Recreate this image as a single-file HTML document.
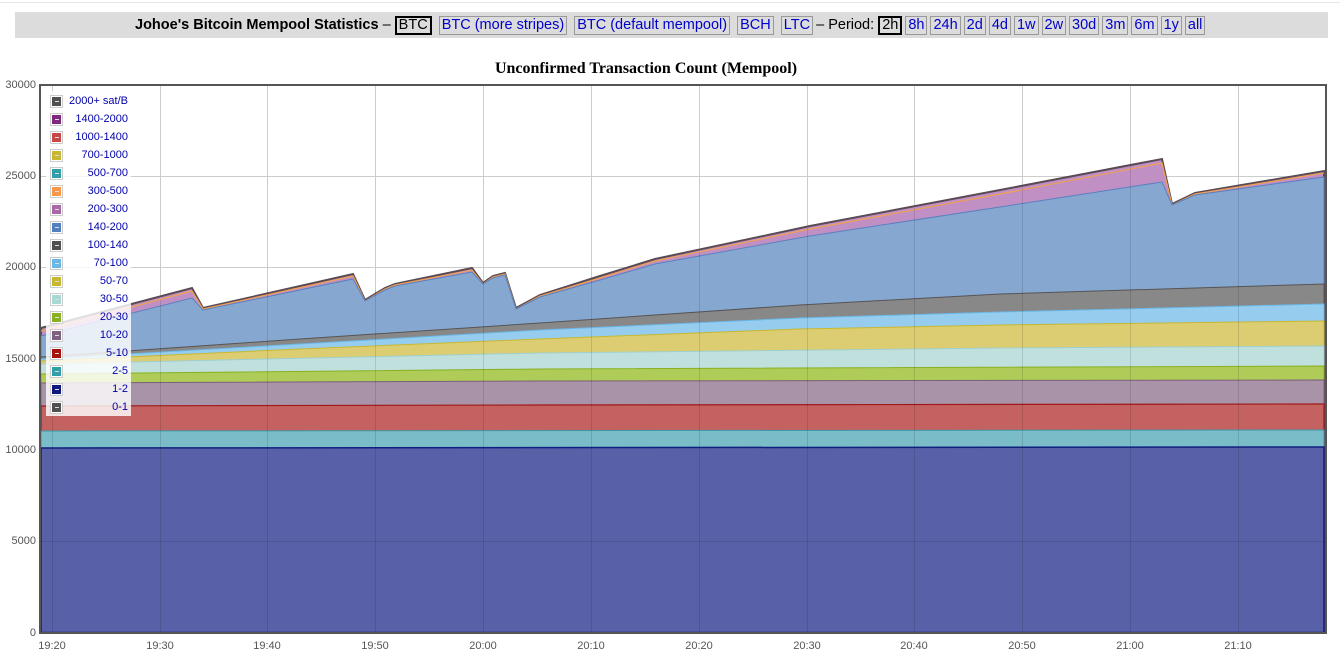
<!DOCTYPE html>
<html><head><meta charset="utf-8"><style>
body{margin:0;background:#fff;width:1340px;height:647px;overflow:hidden;font-family:"Liberation Sans",Arial,sans-serif;position:relative}
.bar{position:absolute;left:15px;top:12px;width:1313px;height:26px;background:#dcdcdc}
.nav{position:absolute;left:135px;top:16px;font-size:14.5px;white-space:nowrap;color:#000}
.nav b{font-weight:bold}
.nav span{display:inline-block;border:1px solid #999;color:#00c;padding:0 2px;line-height:17px;margin-right:3px}
.nav span.p{margin-right:3px}
.nav span.sel{border:2px solid #000;color:#000;line-height:15px}
.title{position:absolute;left:0;width:1292px;top:60px;text-align:center;font:bold 16px "Liberation Serif",serif}
.yl{position:absolute;right:1304px;font-size:11px;color:#555;text-align:right}
.xl{position:absolute;top:640px;font-size:11px;color:#555;width:40px;text-align:center}
.leg{position:absolute;left:46px;top:91px;width:85px;height:325px;background:rgba(255,255,255,0.82)}
.lr{position:absolute;left:4px;height:14px;width:78px;font-size:11px;color:#00a}
.lr i{position:absolute;left:0;top:0;width:11px;height:11px;border:1px solid #ccc;box-shadow:inset 0 0 0 1px #fff}
.lr i:after{content:"";position:absolute;left:4px;top:5px;width:4px;height:1px;background:#ddd}
.lr b{position:absolute;right:0;top:0;font-weight:normal}
</style></head><body>
<div style="position:absolute;left:0;top:2px;width:1340px;height:1px;background:#e6e6e6"></div>
<div class="bar"></div>
<div class="nav"><b>Johoe's Bitcoin Mempool Statistics</b> – <span class="sel">BTC</span> <span>BTC (more stripes)</span> <span>BTC (default mempool)</span> <span>BCH</span> <span>LTC</span>– Period: <span class="sel p">2h</span><span class="p">8h</span><span class="p">24h</span><span class="p">2d</span><span class="p">4d</span><span class="p">1w</span><span class="p">2w</span><span class="p">30d</span><span class="p">3m</span><span class="p">6m</span><span class="p">1y</span><span class="p">all</span></div>
<div class="title">Unconfirmed Transaction Count (Mempool)</div>
<svg style="position:absolute;left:0;top:0" width="1340" height="647">
<g stroke="#ccc" stroke-width="1">
<line x1="40" y1="176.5" x2="1326" y2="176.5"/><line x1="40" y1="267.5" x2="1326" y2="267.5"/><line x1="40" y1="359.5" x2="1326" y2="359.5"/><line x1="40" y1="450.5" x2="1326" y2="450.5"/><line x1="40" y1="541.5" x2="1326" y2="541.5"/>
<line x1="52.5" y1="85" x2="52.5" y2="633"/><line x1="160.5" y1="85" x2="160.5" y2="633"/><line x1="267.5" y1="85" x2="267.5" y2="633"/><line x1="375.5" y1="85" x2="375.5" y2="633"/><line x1="483.5" y1="85" x2="483.5" y2="633"/><line x1="591.5" y1="85" x2="591.5" y2="633"/><line x1="699.5" y1="85" x2="699.5" y2="633"/><line x1="807.5" y1="85" x2="807.5" y2="633"/><line x1="914.5" y1="85" x2="914.5" y2="633"/><line x1="1022.5" y1="85" x2="1022.5" y2="633"/><line x1="1130.5" y1="85" x2="1130.5" y2="633"/><line x1="1238.5" y1="85" x2="1238.5" y2="633"/>
</g>
<polygon fill="#c090c4" stroke="#5a4a55" stroke-width="2" points="41,328 192,288 203,308 353,274 365,300 385,288 395,284 472,268 483,283 493,276 505,273 516,308 540,295 600,276 655,259 810,226 1000,190 1162,159 1172,204 1195,193 1324,171 1324,633 41,633"/>
<polyline fill="none" stroke="#f0a050" stroke-width="1.2" points="41,331 192,291 203,309 353,276 365,301 385,289 395,285 472,270 483,284 493,277 505,274 516,309 540,296 600,278 655,261 810,229 1000,194 1162,163 1172,205 1195,194 1324,173"/>
<polygon fill="#86a8d0" stroke="#5a80c0" stroke-width="1" points="41,336 192,298 203,310 353,279 365,301 385,290 395,286 472,272 483,284 493,278 505,275 516,309 540,297 600,280 655,264 810,236 1000,207 1162,182 1172,205 1195,195 1324,177 1324,633 41,633"/>
<polygon fill="#888" stroke="#555" stroke-width="1" points="41,357 300,339 540,323 800,305 1000,294 1324,284 1324,633 41,633"/>
<polygon fill="#96cdee" stroke="#6ab8e8" stroke-width="1" points="41,359 300,344 540,330 800,318 1000,312 1324,304 1324,633 41,633"/>
<polygon fill="#dccd72" stroke="#c8b830" stroke-width="1" points="41,361 300,349 540,339 800,329 1000,325 1324,321 1324,633 41,633"/>
<polygon fill="#c0e0de" stroke="#9fcfcc" stroke-width="1" points="41,364 540,353 1000,348 1324,346 1324,633 41,633"/>
<polygon fill="#b0cc58" stroke="#88b020" stroke-width="1" points="41,374 540,369 1324,366 1324,633 41,633"/>
<polygon fill="#a993a8" stroke="#7a6078" stroke-width="1" points="41,383 540,381 1324,380 1324,633 41,633"/>
<polygon fill="#c46262" stroke="#a01818" stroke-width="1.2" points="41,406 540,405 1324,404 1324,633 41,633"/>
<polygon fill="#7abcc8" stroke="#3a9aa8" stroke-width="1" points="41,431 1324,430 1324,633 41,633"/>
<polygon fill="#5861a8" stroke="#102080" stroke-width="1.5" points="41,448 1324,447 1324,633 41,633"/>
<line x1="41" y1="632.5" x2="1324" y2="632.5" stroke="#102080" stroke-width="1.5"/>
<g stroke="rgba(0,0,0,0.12)" stroke-width="1">
<line x1="40" y1="541.5" x2="1326" y2="541.5"/>
<line x1="52.5" y1="340" x2="52.5" y2="633"/><line x1="160.5" y1="300" x2="160.5" y2="633"/><line x1="267.5" y1="290" x2="267.5" y2="633"/><line x1="375.5" y1="290" x2="375.5" y2="633"/><line x1="483.5" y1="283" x2="483.5" y2="633"/><line x1="591.5" y1="280" x2="591.5" y2="633"/><line x1="699.5" y1="252" x2="699.5" y2="633"/><line x1="807.5" y1="228" x2="807.5" y2="633"/><line x1="914.5" y1="208" x2="914.5" y2="633"/><line x1="1022.5" y1="188" x2="1022.5" y2="633"/><line x1="1130.5" y1="166" x2="1130.5" y2="633"/><line x1="1238.5" y1="184" x2="1238.5" y2="633"/>
</g>
<rect x="40" y="85" width="1286" height="548" fill="none" stroke="#555" stroke-width="2"/>
</svg>
<div class="yl" style="top:79px">30000</div>
<div class="yl" style="top:170px">25000</div>
<div class="yl" style="top:261px">20000</div>
<div class="yl" style="top:353px">15000</div>
<div class="yl" style="top:444px">10000</div>
<div class="yl" style="top:535px">5000</div>
<div class="yl" style="top:627px">0</div>
<div class="xl" style="left:32px">19:20</div><div class="xl" style="left:140px">19:30</div><div class="xl" style="left:247px">19:40</div><div class="xl" style="left:355px">19:50</div><div class="xl" style="left:463px">20:00</div><div class="xl" style="left:571px">20:10</div><div class="xl" style="left:679px">20:20</div><div class="xl" style="left:787px">20:30</div><div class="xl" style="left:894px">20:40</div><div class="xl" style="left:1002px">20:50</div><div class="xl" style="left:1110px">21:00</div><div class="xl" style="left:1218px">21:10</div>
<div class="leg">
<div class="lr" style="top:4px"><i style="background:#505050"></i><b>2000+ sat/B</b></div>
<div class="lr" style="top:22px"><i style="background:#802880"></i><b>1400-2000</b></div>
<div class="lr" style="top:40px"><i style="background:#c84848"></i><b>1000-1400</b></div>
<div class="lr" style="top:58px"><i style="background:#c8b830"></i><b>700-1000</b></div>
<div class="lr" style="top:76px"><i style="background:#30a0a8"></i><b>500-700</b></div>
<div class="lr" style="top:94px"><i style="background:#f89848"></i><b>300-500</b></div>
<div class="lr" style="top:112px"><i style="background:#a868a8"></i><b>200-300</b></div>
<div class="lr" style="top:130px"><i style="background:#5080c0"></i><b>140-200</b></div>
<div class="lr" style="top:148px"><i style="background:#505050"></i><b>100-140</b></div>
<div class="lr" style="top:166px"><i style="background:#68b8e8"></i><b>70-100</b></div>
<div class="lr" style="top:184px"><i style="background:#c8b830"></i><b>50-70</b></div>
<div class="lr" style="top:202px"><i style="background:#a8d8d4"></i><b>30-50</b></div>
<div class="lr" style="top:220px"><i style="background:#88b020"></i><b>20-30</b></div>
<div class="lr" style="top:238px"><i style="background:#806080"></i><b>10-20</b></div>
<div class="lr" style="top:256px"><i style="background:#a81010"></i><b>5-10</b></div>
<div class="lr" style="top:274px"><i style="background:#30a0a8"></i><b>2-5</b></div>
<div class="lr" style="top:292px"><i style="background:#101880"></i><b>1-2</b></div>
<div class="lr" style="top:310px"><i style="background:#505050"></i><b>0-1</b></div>
</div>
</body></html>
